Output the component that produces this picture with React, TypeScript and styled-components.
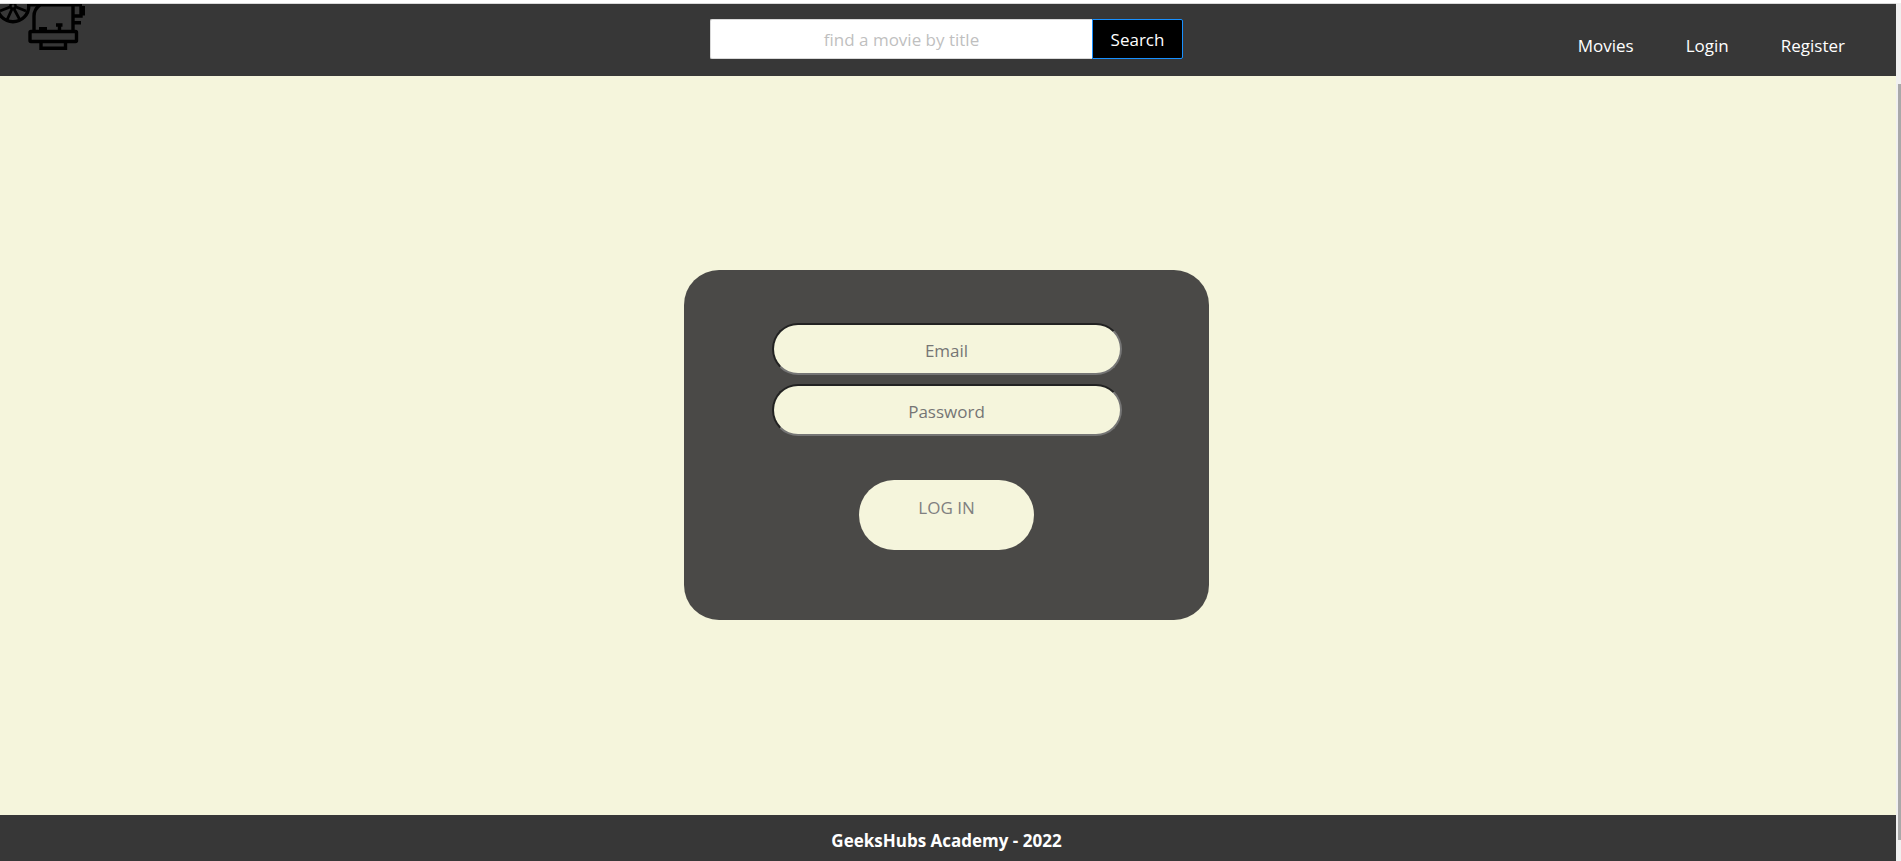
import React from "react";
import styled, { createGlobalStyle } from "styled-components";

const font = '"Segoe UI", "Open Sans", "Noto Sans", sans-serif';

const GlobalStyle = createGlobalStyle`
  *, *::before, *::after { box-sizing: border-box; }
  body { margin: 0; background: #f5f5dc; font-family: ${font}; font-size: 17px; }
  input, button { font: inherit; }
`;

const Window = styled.div`
  display: grid;
  grid-template-columns: minmax(0, 1fr) 5px;
  min-height: 100vh;
  border-top: 3px solid #fff;
`;

const Page = styled.div`
  display: flex;
  flex-direction: column;
  border-top: 1px solid #d9d9d9;
`;

const ScrollTrack = styled.div`
  display: flex;
  flex-direction: column;
  padding: 81px 0 21px 2px;
  background: #f0f0f0;
`;

const ScrollThumb = styled.div`
  flex: 1;
  background: #a8a8a8;
`;

const Header = styled.header`
  display: grid;
  grid-template-columns: minmax(0, 1fr) minmax(0, 473px) minmax(0, 1fr);
  height: 72px;
  padding-right: 3px;
  overflow: hidden;
  background: #373737;
`;

const Logo = styled.svg`
  display: block;
  width: 86px;
  height: 46px;
`;

const SearchForm = styled.form`
  display: flex;
  height: 40px;
  margin-top: 15px;
`;

const SearchInput = styled.input`
  flex: 1;
  min-width: 0;
  padding: 0 11px;
  border: 1px solid #d9d9d9;
  border-right: 0;
  border-radius: 2px 0 0 2px;
  background: #fff;
  text-align: center;
  &::placeholder { color: #bfbfbf; }
`;

const SearchButton = styled.button`
  width: 91px;
  padding: 0;
  border: 1px solid #1890ff;
  border-radius: 0 2px 2px 0;
  background: #000;
  color: #fff;
`;

const Nav = styled.nav`
  display: flex;
  justify-content: flex-end;
  gap: 52px;
  padding: 30px 48px 0 0;
  line-height: 24px;
`;

const NavLink = styled.a`
  color: #fff;
  text-decoration: none;
`;

const Main = styled.main`
  display: flex;
  flex: 1;
  align-items: center;
  justify-content: center;
  padding: 0 3px 1px 0;
  background: #f5f5dc;
`;

const LoginCard = styled.form`
  display: flex;
  flex-direction: column;
  align-items: center;
  gap: 9px;
  width: 525px;
  height: 350px;
  padding-top: 53px;
  border-radius: 35px;
  background: #4a4947;
`;

const Field = styled.input`
  width: 350px;
  height: 52px;
  padding: 2px 8px 0;
  border: 2px solid;
  border-color: #222 #757575 #757575 #222;
  border-radius: 26px;
  background: #f5f5dc;
  text-align: center;
  &::placeholder { color: #757575; }
`;

const LoginButton = styled.button`
  display: flex;
  justify-content: center;
  width: 175px;
  height: 70px;
  margin-top: 35px;
  padding: 16px 0 0;
  border: 0;
  border-radius: 35px;
  background: #f5f5dc;
  color: #808080;
  line-height: 24px;
`;

const Footer = styled.footer`
  height: 46px;
  padding: 14px 3px 0 0;
  background: #373737;
  color: #fff;
  font-weight: 700;
  line-height: 24px;
  text-align: center;
`;

const CameraLogo = () => (
  <Logo viewBox="0 0 86 46" fill="none" stroke="#000" strokeWidth="3.4" role="img" aria-label="Movie camera">
    <circle cx="13" cy="2" r="15.8" />
    <circle cx="13" cy="2" r="2.6" strokeWidth="2.4" />
    <g strokeWidth="2.8">
      <path d="M10 3 0 7M16 3l10 4M12 5 7 16M14 5l6 11" />
    </g>
    <path d="M27 1.200h55" strokeWidth="2.6" />
    <path d="M34 27V12c0-5 2-8 6-11M73 1v26" />
    <path d="M39 25h8" strokeWidth="4" />
    <path d="M59.500 27v-5M56 21h6.500" />
    <path d="M74 12h7V2M74 18.700h7" />
    <rect x="80" y="2" width="5" height="9.500" fill="#000" stroke="none" />
    <rect x="30" y="27.500" width="46.500" height="10" rx="1" />
    <path d="M41 38v6.300h24.500V38" />
  </Logo>
);

const links = ["Movies", "Login", "Register"];

export default function App() {
  const stay = (e: React.FormEvent) => e.preventDefault();
  return (
    <Window>
      <GlobalStyle />
      <Page>
        <Header>
          <CameraLogo />
          <SearchForm role="search" onSubmit={stay}>
            <SearchInput type="text" aria-label="find a movie by title" placeholder="find a movie by title" />
            <SearchButton type="submit">Search</SearchButton>
          </SearchForm>
          <Nav>
            {links.map((label) => (
              <NavLink key={label} href={`#${label.toLowerCase()}`}>{label}</NavLink>
            ))}
          </Nav>
        </Header>
        <Main>
          <LoginCard onSubmit={stay}>
            <Field type="email" aria-label="Email" placeholder="Email" />
            <Field type="password" aria-label="Password" placeholder="Password" />
            <LoginButton type="submit">LOG IN</LoginButton>
          </LoginCard>
        </Main>
        <Footer>GeeksHubs Academy - 2022</Footer>
      </Page>
      <ScrollTrack aria-hidden="true">
        <ScrollThumb />
      </ScrollTrack>
    </Window>
  );
}
